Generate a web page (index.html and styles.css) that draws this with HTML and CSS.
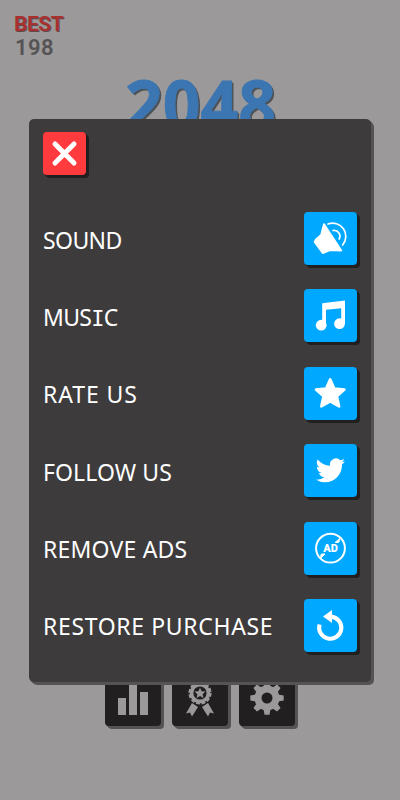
FILE: index.html
```html
<!DOCTYPE html>
<html lang="en">
<head>
    <meta charset="UTF-8">
    <meta name="viewport" content="width=device-width, initial-scale=1.0">
    <title>2048 - Settings</title>
    <link rel="stylesheet" href="styles.css">
</head>
<body>
    <main class="game">
        <div class="score">
            <div class="score-label">BEST</div>
            <div class="score-value">198</div>
        </div>
        <h1 class="title">2048</h1>
        <nav class="toolbar">
            <button class="tool" aria-label="Statistics">
                <svg viewBox="0 0 56 56"><path d="M13 28h8v17h-8zM24 10h8v35h-8zM35 22h8v23h-8z"/></svg>
            </button>
            <button class="tool" aria-label="Awards">
                <svg viewBox="0 0 56 56">
                    <path d="M20 33l6 4-6 9.5-2-4-4 1zM36 33l-6 4 6 9.5 2-4 4 1z"/>
                    <circle cx="28" cy="23" r="10.3"/>
                    <circle cx="28" cy="23" r="10.5" fill="none" stroke="#9b999a" stroke-width="2.2" stroke-dasharray="3.8 1.7"/>
                    <circle cx="28" cy="23" r="6.6" fill="#211f20"/>
                    <path d="M28 17.7l1.6 3.5 3.8.4-2.8 2.6.8 3.7-3.4-1.9-3.4 1.9.8-3.7-2.8-2.6 3.8-.4z"/>
                </svg>
            </button>
            <button class="tool" aria-label="Settings">
                <svg viewBox="0 0 56 56">
                    <g transform="translate(28 28)">
                        <g id="teeth">
                            <path id="tooth" d="M-3.5-11l1-5.7h5l1 5.7v22l-1 5.7h-5l-1-5.7z"/>
                            <use href="#tooth" transform="rotate(90)"/>
                        </g>
                        <use href="#teeth" transform="rotate(45)"/>
                        <circle r="12.5"/>
                        <circle r="5.5" fill="#211f20"/>
                    </g>
                </svg>
            </button>
        </nav>
    </main>

    <section class="panel">
        <button class="close" aria-label="Close">
            <svg viewBox="0 0 43 43"><path d="M12 12l19 19M31 12L12 31"/></svg>
        </button>
        <ul class="menu">
            <li>
                <span class="label sound">SOUND</span>
                <button class="tile" aria-label="Sound">
                    <svg viewBox="0 0 53 53">
                        <path d="M20 12.2L37.2 38.5 26 38 18.7 41 16.2 37.5 10.7 30 12 27.5 17.2 23z" stroke="#fff" stroke-width="2" stroke-linejoin="round"/>
                        <path d="M24 12A13.2 13.2 0 0 1 38.6 33M29 18.5A5.8 5.8 0 0 1 35.2 27" fill="none" stroke="#fff" stroke-width="1.7" stroke-linecap="round"/>
                    </svg>
                </button>
            </li>
            <li>
                <span class="label music">MUS<span class="serif-i">I</span>C</span>
                <button class="tile" aria-label="Music">
                    <svg viewBox="0 0 53 53">
                        <path d="M18.2 14.2L41 11.5V35h-3.8V19.2L22 20.7v16h-3.8z"/>
                        <circle cx="17.2" cy="36.2" r="5.4"/>
                        <circle cx="35.5" cy="34.7" r="5.4"/>
                    </svg>
                </button>
            </li>
            <li>
                <span class="label rate">RATE US</span>
                <button class="tile" aria-label="Rate us">
                    <svg viewBox="0 0 53 53"><path d="M26.2 12.4l4.1 9.1 10.1 1.1-7.5 6.8 2.2 10-8.9-5.1-8.9 5.1 2.2-10-7.5-6.8 10.1-1.1z" stroke="#fff" stroke-width="2.6" stroke-linejoin="round"/></svg>
                </button>
            </li>
            <li>
                <span class="label follow">FOLLOW US</span>
                <button class="tile" aria-label="Follow us">
                    <svg viewBox="0 0 53 53">
                        <path transform="translate(11.7 11.7) scale(1.22)" d="M23.95 4.57a10 10 0 0 1-2.82.77 4.96 4.96 0 0 0 2.16-2.72c-.95.55-2 .95-3.13 1.18a4.92 4.92 0 0 0-8.38 4.48C7.69 8.09 4.07 6.13 1.64 3.16a4.92 4.92 0 0 0 1.52 6.57 4.9 4.9 0 0 1-2.23-.61v.06c0 2.38 1.69 4.37 3.95 4.83a5 5 0 0 1-2.21.08 4.94 4.94 0 0 0 4.6 3.42A9.87 9.87 0 0 1 0 19.54a13.99 13.99 0 0 0 7.55 2.21c9.05 0 14-7.5 14-13.98 0-.21 0-.42-.02-.63a9.94 9.94 0 0 0 2.42-2.57z"/>
                    </svg>
                </button>
            </li>
            <li>
                <span class="label ads">REMOVE ADS</span>
                <button class="tile" aria-label="Remove ads">
                    <svg viewBox="0 0 53 53">
                        <circle cx="26.5" cy="26.2" r="14.4" fill="none" stroke="#fff" stroke-width="2"/>
                        <path d="M37 15.5l-6 5h3.5l1-1.5M16 37l5-5h-3.5l-1 1.5" stroke="#fff" stroke-width="1"/>
                        <text x="26.5" y="30.2" text-anchor="middle" class="ad">AD</text>
                    </svg>
                </button>
            </li>
            <li>
                <span class="label restore">RESTORE PURCHASE</span>
                <button class="tile" aria-label="Restore purchase">
                    <svg viewBox="0 0 53 53">
                        <path d="M15.6 25.5A11.1 11.1 0 1 0 27 17.6" fill="none" stroke="#fff" stroke-width="4.1"/>
                        <path d="M19 17.4L28 11v13z"/>
                    </svg>
                </button>
            </li>
        </ul>
    </section>
</body>
</html>
```
FILE: styles.css
```css
* {
    box-sizing: border-box;
}
body {
    margin: 0;
    background-color: #9b999a;
    font-family: "Noto Sans", "Open Sans", sans-serif;
}
button {
    display: block;
    padding: 0;
    border: none;
}
svg {
    display: block;
    width: 100%;
    height: 100%;
}
.game {
    display: flex;
    flex-direction: column;
    height: 800px;
    padding: 12px 0 74px;
}
.score {
    padding-left: 14px;
    font-family: Roboto, sans-serif;
    font-size: 21px;
    font-weight: 600;
    line-height: 24px;
}
.score-label {
    color: #aa3030;
    letter-spacing: -0.4px;
    text-shadow: 1px 1px 0 #5e4a4b;
}
.score-value {
    padding-left: 1px;
    color: #555354;
    font-size: 22px;
    letter-spacing: 0.4px;
}
.title {
    margin: 10px 0 0 1px;
    color: #3c76b2;
    font-family: "Open Sans", sans-serif;
    font-size: 66px;
    font-weight: 700;
    line-height: 66px;
    text-align: center;
    text-shadow: 1px 1px 0 #4e5358, 2px 2px 0 #4e5358;
    -webkit-text-stroke: 0.8px #3c76b2;
}
.toolbar {
    display: flex;
    justify-content: center;
    gap: 11px;
    margin-top: auto;
}
.tool {
    width: 56px;
    height: 56px;
    border-radius: 4px;
    background-color: #211f20;
    box-shadow: 1px 1px 0 #555354, 2px 2px 0 #555354, 3px 3px 0 #555354;
    fill: #9b999a;
}

/* settings dialog over the game */
.panel {
    position: absolute;
    top: 119px;
    left: 29px;
    width: 342px;
    height: 563px;
    padding: 13px 14px;
    border-radius: 5px;
    background-color: #3d3b3c;
    box-shadow: 1px 1px 0 #555354, 2px 2px 0 #555354, 3px 3px 0 #555354;
}
.close {
    width: 43px;
    height: 43px;
    border-radius: 4px;
    background-color: #ff3b3d;
    box-shadow: 1px 1px 0 #211f20, 2px 2px 0 #211f20, 3px 3px 0 #211f20;
}
.close path {
    stroke: #fff;
    stroke-width: 5;
    stroke-linecap: round;
}
.menu {
    display: grid;
    gap: 24.4px;
    margin: 37px 0 0;
    padding: 0;
    list-style: none;
}
.menu li {
    display: flex;
    align-items: center;
    justify-content: space-between;
    height: 53px;
}
.label {
    padding-top: 2px;
    color: #fff;
    font-size: 23px;
    line-height: 30px;
    white-space: nowrap;
}
.sound {
    letter-spacing: -0.6px;
}
.music {
    letter-spacing: -0.7px;
}
.rate {
    letter-spacing: 0.9px;
}
.follow {
    letter-spacing: 0.1px;
}
.ads {
    letter-spacing: 0.2px;
}
.restore {
    letter-spacing: 0.65px;
}
.serif-i {
    font-family: "DejaVu Sans Mono", monospace;
    font-size: 22px;
    line-height: 1;
}
.tile {
    width: 53px;
    height: 53px;
    border-radius: 4px;
    background-color: #00a8ff;
    box-shadow: 1px 1px 0 #211f20, 2px 2px 0 #211f20, 3px 3px 0 #211f20;
    fill: #fff;
}
.ad {
    font-family: Roboto, sans-serif;
    font-size: 11px;
    font-weight: 900;
}
```
